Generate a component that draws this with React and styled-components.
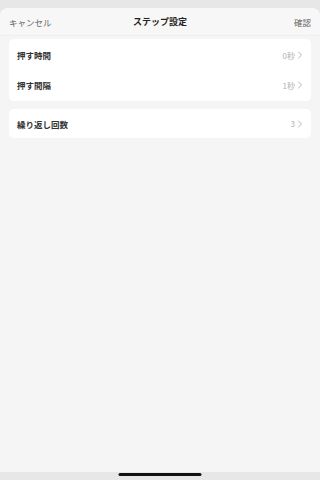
import React from "react";
import styled, { createGlobalStyle } from "styled-components";

const Global = createGlobalStyle`
  html, body { margin: 0; padding: 0; background: #e7e7e7; }
  body { font-family: "Noto Sans CJK JP", "Noto Sans", sans-serif; }
  #root { width: 100%; height: 100vh; }
`;

const Screen = styled.div`
  position: relative;
  width: 100%;
  height: 100vh;
  padding-top: 8px;
  box-sizing: border-box;
  background: #e7e7e7;
  display: flex;
  flex-direction: column;
`;

const Sheet = styled.div`
  flex: 1;
  background: #f5f5f5;
  border-radius: 8px 8px 0 0;
  display: flex;
  flex-direction: column;
  margin-bottom: 8px;
`;

const Header = styled.div`
  height: 27px;
  display: grid;
  grid-template-columns: 1fr auto 1fr;
  align-items: center;
  padding: 0 9px;
  background: #f7f7f7;
  border-radius: 8px 8px 0 0;
  border-bottom: 1px solid #efefef;
`;

const HeaderButton = styled.span`
  font-size: 8.5px;
  color: #666;
  justify-self: ${(p) => (p.$right ? "end" : "start")};
`;

const Title = styled.span`
  font-size: 9px;
  font-weight: 700;
  color: #222;
`;

const Content = styled.div`
  display: flex;
  flex-direction: column;
  gap: 8px;
  padding: 3px 9px 0;
`;

const Card = styled.div`
  background: #fff;
  border-radius: 5px;
  display: flex;
  flex-direction: column;
  padding: ${(p) => (p.$single ? "0" : "1px 0")};
`;

const Row = styled.div`
  height: ${(p) => p.$h || 30}px;
  display: flex;
  align-items: center;
  justify-content: space-between;
  padding: 0 8px;
`;

const Label = styled.span`
  font-size: 8.5px;
  font-weight: 700;
  color: #333;
`;

const Value = styled.span`
  display: flex;
  align-items: center;
  gap: 2px;
  font-size: 8px;
  color: #b0b0b0;
`;

const HomeIndicator = styled.div`
  position: absolute;
  left: 50%;
  transform: translateX(-50%);
  bottom: 4px;
  width: 83px;
  height: 3px;
  border-radius: 2px;
  background: #111;
`;

const Chevron = () => (
  <svg width="6" height="8" viewBox="0 0 6 8" fill="none">
    <path d="M1.5 1 L4.5 4 L1.5 7" stroke="#b5b5b5" strokeWidth="1" strokeLinecap="round" strokeLinejoin="round" />
  </svg>
);

export default function App() {
  return (
    <>
      <Global />
      <Screen>
        <Sheet>
          <Header>
            <HeaderButton>キャンセル</HeaderButton>
            <Title>ステップ設定</Title>
            <HeaderButton $right>確認</HeaderButton>
          </Header>
          <Content>
            <Card>
              <Row>
                <Label>押す時間</Label>
                <Value>0秒 <Chevron /></Value>
              </Row>
              <Row>
                <Label>押す間隔</Label>
                <Value>1秒 <Chevron /></Value>
              </Row>
            </Card>
            <Card $single>
              <Row $h={29}>
                <Label>繰り返し回数</Label>
                <Value>3 <Chevron /></Value>
              </Row>
            </Card>
          </Content>
        </Sheet>
        <HomeIndicator />
      </Screen>
    </>
  );
}
